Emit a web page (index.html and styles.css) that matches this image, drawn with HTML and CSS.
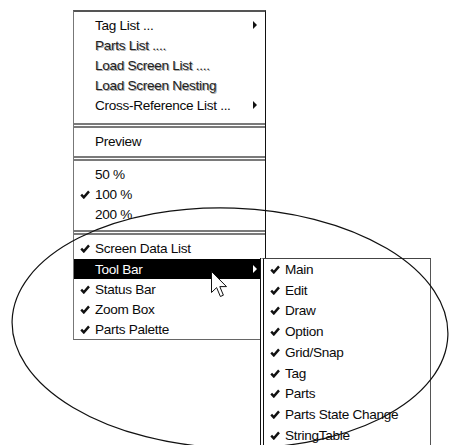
FILE: index.html
```html
<!DOCTYPE html>
<html>
<head>
<meta charset="utf-8">
<link rel="stylesheet" href="styles.css">
</head>
<body>
<div class="stage">
  <div class="menu upper">
    <div class="item"><span class="mark"></span><span class="label">Tag List ...</span><span class="arrow"></span></div>
    <div class="item dis"><span class="mark"></span><span class="label">Parts List ....</span></div>
    <div class="item dis"><span class="mark"></span><span class="label">Load Screen List ....</span></div>
    <div class="item dis"><span class="mark"></span><span class="label">Load Screen Nesting</span></div>
    <div class="item"><span class="mark"></span><span class="label">Cross-Reference List ...</span><span class="arrow"></span></div>
    <div class="sep s1"></div>
    <div class="item"><span class="mark"></span><span class="label">Preview</span></div>
    <div class="sep s2"></div>
    <div class="item"><span class="mark"></span><span class="label">50 %</span></div>
    <div class="item"><span class="mark"><svg class="check" viewBox="0 0 10 9"><path d="M1.2 4.6 L3.8 7.4 L9 1.4"/></svg></span><span class="label">100 %</span></div>
    <div class="item"><span class="mark"></span><span class="label">200 %</span></div>
    <div class="sep s3"></div>
    <div class="item"><span class="mark"><svg class="check" viewBox="0 0 10 9"><path d="M1.2 4.6 L3.8 7.4 L9 1.4"/></svg></span><span class="label">Screen Data List</span></div>
  </div>
  <div class="lower-row">
    <div class="menu lower">
      <div class="item active"><span class="mark"></span><span class="label">Tool Bar</span><span class="arrow"></span></div>
      <div class="item"><span class="mark"><svg class="check" viewBox="0 0 10 9"><path d="M1.2 4.6 L3.8 7.4 L9 1.4"/></svg></span><span class="label">Status Bar</span></div>
      <div class="item"><span class="mark"><svg class="check" viewBox="0 0 10 9"><path d="M1.2 4.6 L3.8 7.4 L9 1.4"/></svg></span><span class="label">Zoom Box</span></div>
      <div class="item"><span class="mark"><svg class="check" viewBox="0 0 10 9"><path d="M1.2 4.6 L3.8 7.4 L9 1.4"/></svg></span><span class="label">Parts Palette</span></div>
    </div>
    <div class="menu submenu">
      <div class="item"><span class="mark"><svg class="check" viewBox="0 0 10 9"><path d="M1.2 4.6 L3.8 7.4 L9 1.4"/></svg></span><span class="label">Main</span></div>
      <div class="item"><span class="mark"><svg class="check" viewBox="0 0 10 9"><path d="M1.2 4.6 L3.8 7.4 L9 1.4"/></svg></span><span class="label">Edit</span></div>
      <div class="item"><span class="mark"><svg class="check" viewBox="0 0 10 9"><path d="M1.2 4.6 L3.8 7.4 L9 1.4"/></svg></span><span class="label">Draw</span></div>
      <div class="item"><span class="mark"><svg class="check" viewBox="0 0 10 9"><path d="M1.2 4.6 L3.8 7.4 L9 1.4"/></svg></span><span class="label">Option</span></div>
      <div class="item"><span class="mark"><svg class="check" viewBox="0 0 10 9"><path d="M1.2 4.6 L3.8 7.4 L9 1.4"/></svg></span><span class="label">Grid/Snap</span></div>
      <div class="item"><span class="mark"><svg class="check" viewBox="0 0 10 9"><path d="M1.2 4.6 L3.8 7.4 L9 1.4"/></svg></span><span class="label">Tag</span></div>
      <div class="item"><span class="mark"><svg class="check" viewBox="0 0 10 9"><path d="M1.2 4.6 L3.8 7.4 L9 1.4"/></svg></span><span class="label">Parts</span></div>
      <div class="item"><span class="mark"><svg class="check" viewBox="0 0 10 9"><path d="M1.2 4.6 L3.8 7.4 L9 1.4"/></svg></span><span class="label">Parts State Change</span></div>
      <div class="item"><span class="mark"><svg class="check" viewBox="0 0 10 9"><path d="M1.2 4.6 L3.8 7.4 L9 1.4"/></svg></span><span class="label">StringTable</span></div>
    </div>
  </div>
  <svg class="ellipse" width="449" height="445" viewBox="0 0 449 445">
    <ellipse cx="230" cy="328" rx="218" ry="120" transform="rotate(2 230 328)"/>
  </svg>
  <svg class="cursor" width="18" height="28" viewBox="0 0 18 28">
    <path d="M0.5 0.5 L0.5 21.5 L5.6 16.6 L9.4 25.5 L12.4 24.2 L8.8 15.6 L15.5 15.6 Z"/>
  </svg>
</div>
</body>
</html>
```

FILE: styles.css
```css
body {
  margin: 0;
  background: #fff;
}

.stage {
  position: relative;
  width: 449px;
  height: 445px;
  overflow: hidden;
  box-sizing: border-box;
  padding-top: 10px;
  font-family: "Liberation Sans", Arial, sans-serif;
  font-size: 13.6px;
  letter-spacing: -0.3px;
  color: #0a0a0a;
}

.menu {
  box-sizing: border-box;
  background: #fff;
}

.upper {
  margin-left: 73px;
  width: 193px;
  border-top: 2px solid #555;
  border-left: 1px solid #777;
  border-right: 1px solid #111;
  padding-top: 3px;
}

.item {
  height: 20px;
  display: flex;
  align-items: center;
  white-space: nowrap;
}

.mark {
  flex: none;
  width: 21px;
  height: 100%;
  display: flex;
  align-items: center;
}

.check {
  width: 10px;
  height: 9px;
  margin-left: 6px;
  fill: none;
  stroke: #111;
  stroke-width: 2.4;
}

.label {
  flex: 1;
}

.dis .label {
  color: #222;
  text-shadow: 1px 1px 0 #aaa;
}

.arrow {
  flex: none;
  width: 0;
  height: 0;
  border-top: 4px solid transparent;
  border-bottom: 4px solid transparent;
  border-left: 4px solid #111;
  margin-right: 8px;
}

.sep {
  height: 1px;
  border-top: 2px solid #7a7a7a;
  border-bottom: 2px solid #7a7a7a;
}

.s1 { margin: 8px 0 3px; }
.s2 { margin: 5px 0 3px; }
.s3 { margin: 6px 0 3px; }

.lower-row {
  display: flex;
  align-items: flex-start;
  margin-left: 73px;
}

.lower {
  width: 187px;
  border-left: 1px solid #777;
  border-bottom: 1px solid #666;
  padding-top: 1px;
}

.lower .arrow {
  margin-right: 3px;
}

.active {
  background: #000;
  color: #fff;
}

.active .arrow {
  border-left-color: #fff;
}

.submenu {
  width: 171px;
  border-left: 4px double #111;
  border-top: 1px solid #444;
  border-right: 1px solid #555;
}

.submenu .item {
  height: 20.75px;
}

.ellipse {
  position: absolute;
  left: 0;
  top: 0;
  pointer-events: none;
  fill: none;
  stroke: #111;
  stroke-width: 1.2;
}

.cursor {
  position: absolute;
  left: 211px;
  top: 271px;
  fill: #fff;
  stroke: #111;
  stroke-width: 1;
}
```
